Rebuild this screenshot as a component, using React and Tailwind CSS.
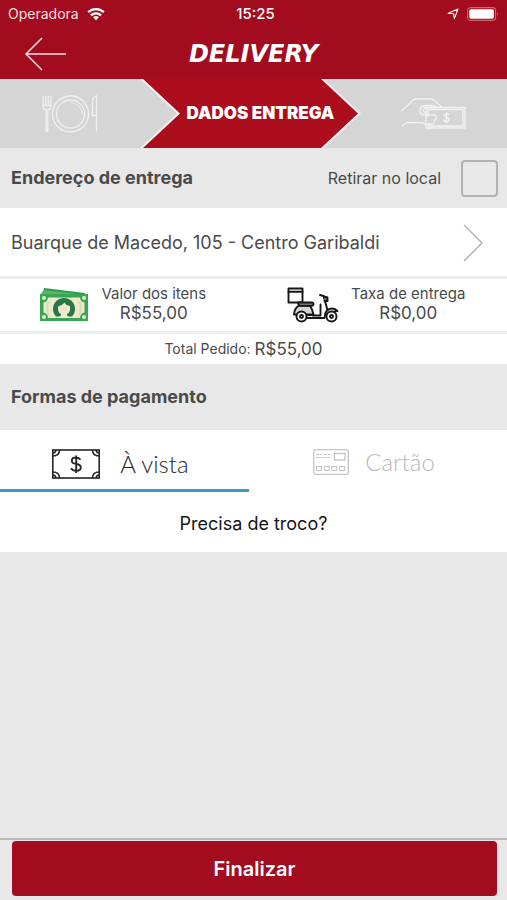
import { useState } from "react";

const steps = "[clip-path:polygon(0_0,calc(100%-37px)_0,100%_50%,calc(100%-37px)_100%,0_100%,37px_50%)]";

function WifiIcon() {
  return (
    <svg className="h-4 w-[18px]" viewBox="0 0 18 16" fill="none" stroke="white" strokeWidth="2.3" aria-hidden="true">
      <path d="M1.2 6.2a11.2 11.2 0 0 1 15.6 0" />
      <path d="M4 9.3a7.2 7.2 0 0 1 10 0" />
      <path d="M9 14.2 6.1 11.3a4.2 4.2 0 0 1 5.8 0Z" fill="white" stroke="none" />
    </svg>
  );
}

function LocationIcon() {
  return (
    <svg className="h-3 w-3" viewBox="0 0 12 12" fill="none" stroke="white" strokeWidth="1.1" strokeLinejoin="round" aria-hidden="true">
      <path d="M11 1 7.4 10.6 6.6 5.8 1.2 5.3Z" />
    </svg>
  );
}

function BatteryIcon() {
  return (
    <svg className="h-[14px] w-8" viewBox="0 0 32 14" aria-hidden="true">
      <rect x="0.6" y="0.6" width="28" height="12.8" rx="3.2" fill="none" stroke="#cf6672" strokeWidth="1.1" />
      <rect x="2.3" y="2.3" width="24.6" height="9.4" rx="1.8" fill="white" />
      <path d="M30 4.8q1.6 2.2 0 4.4Z" fill="#cf6672" />
    </svg>
  );
}

function PlateIcon() {
  return (
    <svg className="h-[38px] w-14" viewBox="0 0 56 38" fill="none" stroke="#f0f0f0" strokeWidth="1.3" aria-hidden="true">
      <circle cx="28.5" cy="19" r="18" />
      <circle cx="28.5" cy="19" r="14" />
      <path d="M28.5 7.5a11.5 11.5 0 0 1 11.5 11.5" strokeWidth="0.8" />
      <path d="M1 1v9q0 4.500 3.200 5v21h1.600v-21q3.200-.5 3.200-5v-9M3.700 1v9.500M6.300 1v9.500M1 10.500h8" />
      <path d="M54.500 36.500v-35.500q-4 .5-4 6v13.500h4" />
    </svg>
  );
}

function HandMoneyIcon() {
  return (
    <svg className="h-8 w-[66px]" viewBox="0 0 66 32" fill="none" stroke="#f2f2f2" strokeWidth="1.300" strokeLinejoin="round" strokeLinecap="round" aria-hidden="true">
      <rect x="25" y="9.500" width="39" height="20.500" />
      <rect x="27" y="11.500" width="35" height="16.500" />
      <path d="M1 12.500 12 2.300q1.500-1.300 3.500-1.300h14q2.200 0 4 1.600l7.500 7" />
      <path d="M1 28l4.500-3.300h16q3 2.300 6.500 1.800" />
      <path d="M27 16.800h6q2.500.4 2.500 2.600t-2.500 2.600q1 .8.300 2.300t-3 1.700h-5" fill="#d5d5d5" />
      <path d="M29 7.500h-4.500q-5.500.5-5.500 5.200 0 4.300 5 4.600h4" />
      <path d="M30.500 9.500h-4.500q-3.500.5-3.500 3.200 0 2.700 3 3" />
      <path d="M29 7.500q5 0 7 2" />
      <path d="M48 16.800q-1.200-1.300-3-1t-1.900 1.700q0 1.500 2.400 2t2.500 2.100q-.2 1.700-2.200 1.900t-3.300-1.200M45.500 14.700v10" />
    </svg>
  );
}

function CashIcon() {
  return (
    <svg className="h-9 w-[50px]" viewBox="0 0 50 36" aria-hidden="true">
      <path d="M5 1 46 6v5H4Z" fill="#2f9a50" />
      <path d="M4.500 3 38 7H2Z" fill="#5bb56a" />
      <rect x="1" y="7" width="48" height="27" fill="#36a852" />
      <path d="M9 10.500h32q.5 4.500 4.500 5v10q-4 .5-4.500 5.500H9q-.5-5-4.500-5.500v-10q4-.5 4.500-5Z" fill="#eee9cd" />
      <path d="M9.500 14.500q-2.500 6.500 0 13M40.500 14.500q2.500 6.500 0 13" fill="none" stroke="#d8dcb2" strokeWidth="2" />
      <g fill="#eee9cd">
        <circle cx="5" cy="11" r="2" />
        <circle cx="45" cy="11" r="2" />
        <circle cx="5" cy="30" r="2" />
        <circle cx="45" cy="30" r="2" />
      </g>
      <path d="M17 29.500a11 11 0 1 1 16 0Z" fill="#297746" />
      <path d="M19 19.500q4.500-1 6.500-4 1.500 3 5.500 3.500v3q0 3.500-3 5v1.500l3 2H19l3-2v-1.500q-3-1.500-3-5Z" fill="#eee9cd" />
    </svg>
  );
}

function ScooterIcon() {
  return (
    <svg className="h-9 w-[52px]" viewBox="0 0 52 36" fill="none" stroke="#161616" strokeWidth="1.900" strokeLinejoin="round" strokeLinecap="round" aria-hidden="true">
      <path d="M1.500 1.500h14v14h-14Z" />
      <path d="M1.500 4.800h14" />
      <path d="M7 27.500q.2-6 5-9h11q2.500 4 3.500 9Z" fill="#d5d5d5" />
      <path d="M11 15.500h13.500q2 .2 2 1.700t-2 1.700H13q-2-.8-2-3.400Z" fill="#777" />
      <path d="M21 28h4.500M20.500 31h17q.5-5.500 4.500-7.500M26 28.500h7.500V17.500" />
      <path d="M33 8l3.500 1 4 14" />
      <path d="M37 9.500l3.500 1v3.500h-3" fill="#777" />
      <path d="M38 27q2-5.500 7-5.500 3.500 0 5.500 2.500l-3 .5" fill="#d5d5d5" />
      <circle cx="14.500" cy="29.500" r="5" fill="white" />
      <circle cx="14.500" cy="29.500" r="1.500" />
      <circle cx="44.500" cy="29.500" r="5" fill="white" />
      <circle cx="44.500" cy="29.500" r="1.500" />
    </svg>
  );
}

function BillIcon() {
  return (
    <svg className="h-[30px] w-12" viewBox="0 0 48 30" fill="none" stroke="#252525" strokeWidth="1.600" aria-hidden="true">
      <rect x="0.800" y="1" width="46.400" height="28" />
      <path d="M7.500 1q0 6-6.700 6M3.800 1q0 3-3 3M40.500 1q0 6 6.700 6M44.200 1q0 3 3 3M7.500 29q0-6-6.700-6M3.800 29q0-3-3-3M40.500 29q0-6 6.700-6M44.200 29q0-3 3-3" />
      <path d="M28.500 10.800q-1.500-2.300-4.500-2.300-4.200.1-4.200 3.200 0 2.500 4.300 3.200 4.700.7 4.700 3.600 0 3.200-4.700 3.300-3.400 0-5.100-2.600M24.200 6.500v17.500" strokeWidth="1.900" />
    </svg>
  );
}

function CardIcon() {
  return (
    <svg className="h-[26px] w-9" viewBox="0 0 36 26" fill="none" stroke="#c4c4c4" strokeWidth="1" aria-hidden="true">
      <rect x="0.700" y="0.700" width="34.600" height="24.600" rx="2" strokeWidth="1.300" />
      <path d="M3 5.500h6M11 5.500h6M3 8.500h14" strokeDasharray="3 0.600" />
      <rect x="21.500" y="4.500" width="10.500" height="6.500" strokeWidth="1.300" />
      <rect x="3.500" y="17.500" width="5" height="4" />
      <rect x="11.200" y="17.500" width="5" height="4" />
      <rect x="18.900" y="17.500" width="5" height="4" />
      <rect x="26.600" y="17.500" width="5" height="4" />
    </svg>
  );
}

function Amount({ icon, label, value }) {
  return (
    <div className="flex flex-1 items-center justify-center gap-3 pr-2">
      {icon}
      <dl className="pb-1 text-center">
        <dt className="text-[15px] leading-5">{label}</dt>
        <dd className="text-[17px] leading-[18px]">{value}</dd>
      </dl>
    </div>
  );
}

export default function App() {
  const [pickup, setPickup] = useState(false);
  const [payment, setPayment] = useState("cash");

  return (
    <div className="flex min-h-screen flex-col bg-[#e8e8e8] font-['Inter',sans-serif] text-[#4a4a4a]">
      <header className="bg-[#a30b1f] text-white">
        <div className="grid h-7 grid-cols-3 items-center px-2 text-[15px]">
          <div className="flex items-center gap-2">
            <span className="text-sm text-[#f6dfe2]">Operadora</span>
            <WifiIcon />
          </div>
          <time className="pl-1 text-center font-medium">15:25</time>
          <div className="flex items-center justify-end gap-2">
            <LocationIcon />
            <BatteryIcon />
          </div>
        </div>
        <div className="grid h-[51px] grid-cols-[48px_1fr_48px] items-center px-6">
          <button type="button" aria-label="Voltar" className="flex h-12 items-center">
            <svg className="h-[34px] w-[42px]" viewBox="0 0 42 34" fill="none" stroke="#f5dfe2" strokeWidth="1.500" aria-hidden="true">
              <path d="M18 1 2 17l16 16M2 17h40" />
            </svg>
          </button>
          <h1 className="text-center font-['DejaVu_Sans',sans-serif] text-2xl font-bold italic">DELIVERY</h1>
        </div>
      </header>

      <nav aria-label="Etapas" className="flex h-[69px] bg-[#d5d5d5]">
        <button type="button" aria-label="Itens" className="flex flex-[140] items-center justify-center">
          <PlateIcon />
        </button>
        <div aria-current="step" className={`${steps} flex w-[221px] bg-[#f6efef]`}>
          <div className={`${steps} mx-[3px] flex flex-1 items-center justify-center bg-[#ab0d1c] pl-5 text-[17px] font-black text-white`}>
            DADOS ENTREGA
          </div>
        </div>
        <button type="button" aria-label="Pagamento" className="flex flex-[146] items-center justify-center">
          <HandMoneyIcon />
        </button>
      </nav>

      <main className="flex-1">
        <div className="flex h-[60px] items-center justify-between pr-[9px] pl-[11px]">
          <h2 className="text-lg font-bold">Endereço de entrega</h2>
          <div className="flex items-center gap-5">
            <label htmlFor="pickup" className="text-base">Retirar no local</label>
            <input
              id="pickup"
              type="checkbox"
              checked={pickup}
              onChange={(e) => setPickup(e.target.checked)}
              className="size-[37px] appearance-none rounded border-2 border-[#b2b2b2] checked:bg-[#a30b1f]"
            />
          </div>
        </div>

        <button type="button" className="flex h-[68px] w-full items-center justify-between bg-white pr-6 pl-[11px] pt-px text-left text-lg">
          <span>Buarque de Macedo, 105 - Centro Garibaldi</span>
          <svg className="h-[38px] w-5" viewBox="0 0 20 38" fill="none" stroke="#b4b4b4" strokeWidth="1.500" aria-hidden="true">
            <path d="M1 1 19 19 1 37" />
          </svg>
        </button>

        <div className="flex h-[58px] border-y-[3px] border-[#ececec] bg-white">
          <Amount icon={<CashIcon />} label="Valor dos itens" value="R$55,00" />
          <Amount icon={<ScooterIcon />} label="Taxa de entrega" value="R$0,00" />
        </div>
        <p className="flex h-[30px] items-center justify-center gap-1 bg-white pr-5 text-sm">
          Total Pedido: <span className="text-[17px]">R$55,00</span>
        </p>

        <h2 className="flex h-[66px] items-center px-[11px] text-lg font-bold">Formas de pagamento</h2>

        <div role="tablist" aria-label="Formas de pagamento" className="grid h-[62px] grid-cols-[249fr_258fr] bg-white font-['Lato',sans-serif] text-2xl font-light">
          <button
            type="button"
            role="tab"
            aria-selected={payment === "cash"}
            onClick={() => setPayment("cash")}
            className="flex items-center justify-center gap-5 border-b-[3px] border-[#3b9bc8] pt-2 pr-2 text-[#252525]"
          >
            <BillIcon />
            À vista
          </button>
          <button
            type="button"
            role="tab"
            aria-selected={payment === "card"}
            onClick={() => setPayment("card")}
            className="flex items-center justify-center gap-4 border-b-[3px] border-transparent pt-1 pr-2 text-[#b8b8b8]"
          >
            <CardIcon />
            Cartão
          </button>
        </div>
        <button type="button" className="flex h-[60px] w-full items-center justify-center bg-white pt-1 text-lg text-[#151515]">
          Precisa de troco?
        </button>
      </main>

      <footer className="border-t-2 border-[#b9b9b9] px-[10px] pt-px pb-1 pl-3">
        <button type="button" className="h-[55px] w-full rounded-sm bg-[#a30b1f] text-xl font-semibold text-white">
          Finalizar
        </button>
      </footer>
    </div>
  );
}
